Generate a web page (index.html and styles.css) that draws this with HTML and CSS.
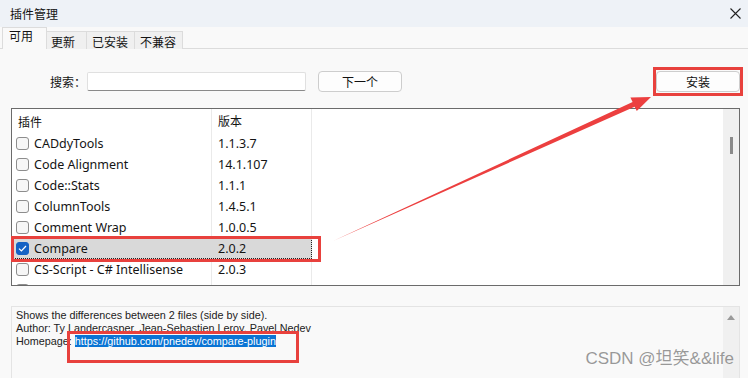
FILE: index.html
```html
<!DOCTYPE html>
<html lang="zh-CN">
<head>
    <meta charset="UTF-8">
    <title>插件管理</title>
    <link rel="stylesheet" href="styles.css">
</head>
<body>
    <div class="window">
        <div class="titlebar">
            <span class="title">插件管理</span>
            <svg class="close" width="11" height="11" viewBox="0 0 11 11"><path d="M0.5 0.5 L10.5 10.5 M10.5 0.5 L0.5 10.5" stroke="#222" stroke-width="1.1" fill="none"/></svg>
        </div>
        <div class="tabs">
            <div class="tab active">可用</div>
            <div class="tab">更新</div>
            <div class="tab">已安装</div>
            <div class="tab">不兼容</div>
        </div>
        <div class="pane">
            <div class="search-row">
                <span class="search-label">搜索：</span>
                <input class="search-input" type="text">
                <button class="btn btn-next">下一个</button>
                <span class="mark-btn"><button class="btn">安装</button></span>
            </div>
            <div class="plugin-list">
                <div class="list-body">
                    <div class="list-head">
                        <div class="col-name">插件</div>
                        <div class="col-ver">版本</div>
                        <div class="col-rest"></div>
                    </div>
                    <div class="row">
                        <div class="col-name"><span class="check"></span>CADdyTools</div>
                        <div class="col-ver">1.1.3.7</div>
                        <div class="col-rest"></div>
                    </div>
                    <div class="row">
                        <div class="col-name"><span class="check"></span>Code Alignment</div>
                        <div class="col-ver">14.1.107</div>
                        <div class="col-rest"></div>
                    </div>
                    <div class="row">
                        <div class="col-name"><span class="check"></span>Code::Stats</div>
                        <div class="col-ver">1.1.1</div>
                        <div class="col-rest"></div>
                    </div>
                    <div class="row">
                        <div class="col-name"><span class="check"></span>ColumnTools</div>
                        <div class="col-ver">1.4.5.1</div>
                        <div class="col-rest"></div>
                    </div>
                    <div class="row">
                        <div class="col-name"><span class="check"></span>Comment Wrap</div>
                        <div class="col-ver">1.0.0.5</div>
                        <div class="col-rest"></div>
                    </div>
                    <div class="row selected">
                        <div class="sel-cell">
                            <div class="col-name"><span class="check checked"><svg width="9" height="7" viewBox="0 0 9 7"><path d="M1 3.6 L3.4 6 L8 1" stroke="#fff" stroke-width="1.2" fill="none"/></svg></span>Compare</div>
                            <div class="col-ver">2.0.2</div>
                        </div>
                        <div class="col-rest"></div>
                    </div>
                    <div class="row">
                        <div class="col-name"><span class="check"></span>CS-Script - C# Intellisense</div>
                        <div class="col-ver">2.0.3</div>
                        <div class="col-rest"></div>
                    </div>
                    <div class="row">
                        <div class="col-name"><span class="check"></span></div>
                        <div class="col-ver"></div>
                        <div class="col-rest"></div>
                    </div>
                </div>
                <div class="vscroll"><div class="thumb"></div></div>
            </div>
            <div class="desc">
                <div class="desc-text">
                    <div>Shows the differences between 2 files (side by side).</div>
                    <div>Author: Ty Landercasper, Jean-Sebastien Leroy, Pavel Nedev</div>
                    <div>Homepage: <span class="link-sel">https://github.com/pnedev/compare-plugin</span></div>
                </div>
                <div class="vscroll"><span class="up"></span></div>
            </div>
        </div>
    </div>

    <!-- annotations drawn over the screenshot -->
    <div class="mark mark-row"></div>
    <div class="mark mark-link"></div>
    <svg class="arrow" width="748" height="378" viewBox="0 0 748 378">
        <polygon points="333,241 634.6,106.7 636.8,111 651,97 630.4,97.6 632.6,102.1" fill="#ec3f3f"/>
    </svg>
    <div class="watermark">CSDN @坦笑&amp;&amp;life</div>
</body>
</html>
```

FILE: styles.css
```css
body {
    margin: 0;
    width: 748px;
    height: 378px;
    overflow: hidden;
    position: relative;
    background-color: #f9f9f9;
    font-family: "Noto Sans", "Noto Sans CJK SC", sans-serif;
    color: #141414;
}
.window {
    height: 378px;
    display: flex;
    flex-direction: column;
}
.titlebar {
    height: 27px;
    flex: none;
    display: flex;
    align-items: center;
    justify-content: space-between;
    padding: 0 7px 0 10px;
    background-color: #eef2f7;
    font-size: 12px;
}
.title {
    font-family: "Noto Sans CJK SC", sans-serif;
}
.tabs {
    height: 21px;
    flex: none;
    display: flex;
    align-items: flex-end;
    padding-left: 2px;
    border-bottom: 1px solid #dcdcdc;
    font-family: "Noto Sans CJK SC", sans-serif;
    font-size: 12px;
}
.tab {
    height: 17px;
    line-height: 19px;
    padding: 0 6px 0 5px;
    background-color: #f0f0f0;
    border: 1px solid #dcdcdc;
    border-bottom: none;
    border-left: none;
    margin-bottom: -1px;
}
.tab:nth-child(2) {
    padding: 0 11px 0 4px;
}
.tab.active {
    height: 21px;
    line-height: 15px;
    padding: 0 13px 0 6px;
    background-color: #f9f9f9;
    border-left: 1px solid #dcdcdc;
}
.pane {
    flex: 1;
    padding: 18px 8px 0 11px;
}
.search-row {
    height: 29px;
    display: flex;
    align-items: center;
    font-family: "Noto Sans CJK SC", sans-serif;
    font-size: 12px;
}
.search-label {
    margin-left: 39px;
    width: 37px;
}
.search-input {
    width: 219px;
    height: 19px;
    box-sizing: border-box;
    border: 1px solid #e0e0e0;
    border-bottom-color: #8a8a8a;
    border-radius: 2px;
    background-color: #fff;
    padding: 0;
}
.btn {
    height: 21px;
    width: 84px;
    box-sizing: border-box;
    border: 1px solid #cdcdcd;
    border-radius: 4px;
    background-color: #fdfdfd;
    font-family: "Noto Sans CJK SC", sans-serif;
    font-size: 12px;
    color: #111;
    padding: 0;
    display: block;
}
.btn-next {
    margin-left: 12px;
}
.mark-btn {
    margin-left: auto;
    margin-right: -3px;
    border: 3px solid #e8413d;
    padding: 1px 0;
}
.plugin-list {
    margin-top: 12px;
    height: 178px;
    box-sizing: border-box;
    border: 1px solid #6b6b6b;
    background-color: #fff;
    display: flex;
    overflow: hidden;
}
.list-body {
    flex: 1;
    display: flex;
    flex-direction: column;
    font-size: 12.5px;
}
.list-head,
.row {
    display: flex;
    flex: none;
}
.list-head {
    height: 24px;
    line-height: 23px;
    font-family: "Noto Sans CJK SC", sans-serif;
    font-size: 12px;
}
.row {
    height: 21px;
    line-height: 21px;
}
.col-name {
    border-right: 1px solid #eaeaea;
    padding-left: 6px;
    box-sizing: border-box;
    width: 200px;
    display: flex;
    align-items: center;
    white-space: nowrap;
}
.row .col-name {
    padding-left: 4px;
}
.col-ver {
    width: 100px;
    box-sizing: border-box;
    border-right: 1px solid #eaeaea;
    padding-left: 6px;
}
.col-rest {
    flex: 1;
}
.check {
    width: 13px;
    height: 13px;
    box-sizing: border-box;
    border: 1px solid #8d8d8d;
    border-radius: 3px;
    background-color: #f6f6f6;
    margin-right: 5px;
    display: flex;
    align-items: center;
    justify-content: center;
}
.check.checked {
    background-color: #1662c4;
    border-color: #1662c4;
}
.sel-cell {
    display: flex;
    background-color: #d9d9d9;
    outline: 1px dotted #222;
    outline-offset: -1px;
}
.sel-cell .col-name,
.sel-cell .col-ver {
    border-right-color: transparent;
}
.vscroll {
    width: 16px;
    flex: none;
    background-color: #f0f0f0;
    position: relative;
}
.thumb {
    position: absolute;
    left: 7px;
    top: 28px;
    width: 3px;
    height: 17px;
    background-color: #8a8a8a;
}
.desc {
    margin-top: 20px;
    height: 80px;
    box-sizing: border-box;
    border: 1px solid #e4e4e4;
    display: flex;
    background-color: #f9f9f9;
}
.desc-text {
    flex: 1;
    padding: 2px 0 0 4px;
    font-family: "Liberation Sans", Arial, sans-serif;
    font-size: 10.8px;
    line-height: 13px;
    color: #222;
}
.link-sel {
    background-color: #0a74d4;
    color: #fff;
}
.up {
    position: absolute;
    left: 4px;
    top: 8px;
    width: 0;
    height: 0;
    border-left: 4px solid transparent;
    border-right: 4px solid transparent;
    border-bottom: 5px solid #9a9a9a;
}
.mark {
    position: absolute;
    border: 3px solid #e8413d;
    box-sizing: border-box;
}
.mark-row {
    left: 11px;
    top: 236px;
    width: 310px;
    height: 26px;
}
.mark-link {
    left: 67px;
    top: 331px;
    width: 232px;
    height: 32px;
}
.arrow {
    position: absolute;
    left: 0;
    top: 0;
}
.watermark {
    position: absolute;
    right: 14px;
    top: 344px;
    font-family: "Liberation Sans", "Noto Sans CJK SC", sans-serif;
    font-size: 17px;
    color: rgba(120, 120, 120, 0.75);
}
```
